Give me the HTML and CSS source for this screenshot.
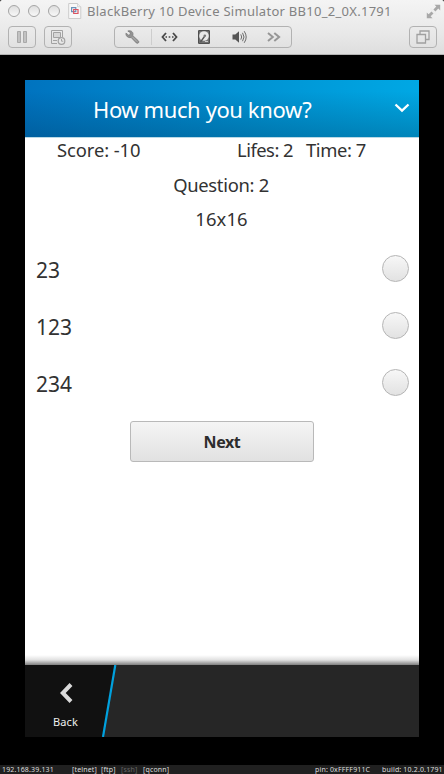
FILE: index.html
```html
<!DOCTYPE html>
<html lang="en">
<head>
<meta charset="utf-8">
<title>BlackBerry 10 Device Simulator</title>
<link rel="stylesheet" href="styles.css">
</head>
<body>
<header class="window">
  <div class="titlebar">
    <div class="lights"><i></i><i></i><i></i></div>
    <svg class="doc" width="14" height="16" viewBox="0 0 14 16"><path d="M.7.500h8.800l3.300 3.300v11.700H.7z" fill="#f8f8f8" stroke="#ccc"/><path d="M9.500.500v3.300h3.300" fill="#eee" stroke="#ccc" stroke-width=".7"/><path d="M3.600 4.600h4.200v4H3.600z" fill="none" stroke="#6b91b8" stroke-width="1.200"/><path d="M5.700 6.500h4.300v4H5.700z" fill="none" stroke="#dc5361" stroke-width="1.200"/></svg>
    <span class="wtitle">BlackBerry 10 Device Simulator BB10_2_0X.1791</span>
    <svg class="expand" width="15" height="15" viewBox="0 0 15 15" fill="#a8a8a8"><path d="M8.500.8h5.700v5.700l-1.900-1.900-2.900 2.900-2-2 2.900-2.900z"/><path d="M.8 8.500v5.700h5.700l-1.900-1.900 2.900-2.900-2-2-2.900 2.900z"/><path d="M4.500 4.500l6 6" stroke="#ececec" stroke-width="1.500"/></svg>
  </div>
  <div class="toolbar">
    <div class="tool"><svg width="12" height="12" viewBox="0 0 12 12"><path d="M1.500.500h3v11h-3zM7.500.500h3v11h-3z" fill="#c2c2c2" stroke="#a9a9a9"/></svg></div>
    <div class="tool snap"><svg width="16" height="16" viewBox="0 0 16 16" fill="none" stroke="#a2a2a2"><path d="M7 14.500H1.500v-13h11V8"/><path d="M3.500 3.500h7v5h-7z" fill="#d7d7d7"/><path d="M3 11.500h4"/><circle cx="11.500" cy="12" r="3.300" fill="#e7e7e7" stroke-width="1.200"/><path d="M11.500 10v2.200h1.800"/></svg></div>
    <div class="group">
      <svg class="wrench" width="15" height="15" viewBox="0 0 16 16"><path d="M1 3.400 3.900 5.500 5.600 4.700 5.700 2.800 3 1.100C5.500 0 8.700 1.500 8.500 4.500L8.300 6l5.900 5.500c1.500 1.600-.6 3.700-2.100 2.300L6.500 8C3.500 8.700.7 6.700 1 3.400z" fill="#929292" stroke="#777" stroke-width=".8"/><path d="M8 7.500l5 5" stroke="#b5b5b5"/></svg>
      <b class="sep"></b>
      <svg class="net" width="17" height="10" viewBox="0 0 17 10"><path d="M5 1 1.500 5 5 9M12 1l3.500 4L12 9" fill="none" stroke="#484848" stroke-width="1.800"/><path d="M4.500 4.200H6v1.600H4.500zM7.700 4.200h1.600v1.600H7.700zM11 4.200h1.500v1.600H11z" fill="#484848"/></svg>
      <svg class="disk" width="12" height="14" viewBox="0 0 12 14"><path d="M.6.600h10.800v12.800H.6z" fill="#777" stroke="#444"/><circle cx="6" cy="6" r="4.800" fill="#e9e9e9"/><path d="M2.500 12 6.500 6.500" stroke="#555" stroke-width="1.300"/><circle cx="6.800" cy="5.800" r="1.300" fill="#777"/><path d="M7 11.500h3" stroke="#ccc"/></svg>
      <svg class="sound" width="15" height="14" viewBox="0 0 15 14"><path d="M.5 4.500h2.800L7 1.200v11.600L3.300 9.500H.5z" fill="#555"/><path d="M8.800 4.400q1.800 2.600 0 5.200M10.500 2.800q3 4.200 0 8.400M12.200 1.200q4 5.800 0 11.600" fill="none" stroke="#6b6b6b"/></svg>
      <svg class="more" width="14" height="10" viewBox="0 0 14 10"><path d="M1 1l4.800 4L1 9M7.300 1l4.800 4-4.800 4" fill="none" stroke="#969696" stroke-width="2"/></svg>
    </div>
    <div class="tool stack"><svg width="14" height="14" viewBox="0 0 14 14" fill="none" stroke="#a0a0a0" stroke-width="1.300"><path d="M1 4.500h8.500V13H1z"/><path d="M4 4.500V1H13v8.500H9.500"/></svg></div>
  </div>
</header>
<main class="phone">
  <div class="head">
    <h1>How much you know?</h1>
    <svg width="16" height="12" viewBox="0 0 16 12"><path d="M1.500 2.500 8 8.700l6.500-6.200" fill="none" stroke="#fff" stroke-width="2.300"/></svg>
  </div>
  <div class="content">
    <div class="stats"><span class="score">Score: -10</span><span class="lifes">Lifes: 2</span><span class="time">Time: 7</span></div>
    <div class="line question">Question: 2</div>
    <div class="line task">16x16</div>
    <ul class="options">
      <li><span>23</span><i></i></li>
      <li><span>123</span><i></i></li>
      <li><span>234</span><i></i></li>
    </ul>
    <button class="next">Next</button>
    <div class="shade"></div>
  </div>
  <nav class="actions">
    <div class="back">
      <svg width="14" height="22" viewBox="0 0 14 22"><path d="M12 2.500 3.800 11l8.200 8.500" fill="none" stroke="#dadada" stroke-width="4"/></svg>
      <span>Back</span>
    </div>
    <svg class="slash" width="18" height="72" viewBox="0 0 18 72"><path d="M0 0h14.500L2.500 72H0z" fill="#111"/><path d="M14.300 0 2 72" stroke="#00a1de" stroke-width="2.200"/></svg>
  </nav>
</main>
<footer class="status"><span class="ip">192.168.39.131</span><span class="telnet">[telnet]</span><span class="ftp">[ftp]</span><span class="ssh">[ssh]</span><span class="qconn">[qconn]</span><span class="pin">pin: 0xFFFF911C</span><span class="build">build: 10.2.0.1791</span></footer>
</body>
</html>
```
FILE: styles.css
```css
* { box-sizing: border-box; }
body { margin: 0; width: 444px; height: 774px; overflow: hidden; background: #000; font-family: "Noto Sans", sans-serif; color: #323232; display: flex; flex-direction: column; white-space: nowrap; }
svg { display: block; flex: none; }
.window { height: 55px; background: linear-gradient(#f4f4f4, #e9e9e9 60%, #dedede); border-bottom: 1px solid #b4b4b4; border-radius: 2px 2px 0 0; }
.titlebar { height: 24px; display: flex; align-items: center; padding: 0 3px 2px 8px; }
.lights { display: flex; gap: 8px; width: 60px; }
.lights i { width: 12px; height: 12px; border: 1px solid #a5a5a5; border-radius: 50%; background: linear-gradient(#dedede, #f8f8f8); }
.wtitle { margin-left: 5px; font-size: 13px; line-height: 20px; letter-spacing: .28px; color: #828282; }
.expand { margin-left: auto; }
.toolbar { display: flex; padding: 2px 7px 0 8px; }
.tool { width: 28px; height: 22px; border: 1px solid #b2b2b2; border-radius: 4px; display: flex; align-items: center; justify-content: center; }
.snap { margin-left: 8px; }
.group { margin-left: 42px; width: 178px; height: 22px; border: 1px solid #b2b2b2; border-radius: 4px; display: flex; align-items: center; padding-left: 10px; }
.sep { margin-left: 11px; width: 1px; height: 16px; background: #cdcdcd; }
.net { margin-left: 9px; }
.disk { margin-left: 20px; }
.sound { margin-left: 22px; }
.more { margin-left: 20px; }
.stack { margin-left: auto; }
.phone { margin: 25px 0 0 25px; width: 394px; height: 657px; display: flex; flex-direction: column; }
.head { height: 57px; background: linear-gradient(180deg, transparent 20%, rgba(0,45,80,.28)), linear-gradient(90deg, #0073bf, #0094d4 60%, #00a8e4); display: flex; align-items: center; justify-content: space-between; padding: 0 9px 0 68px; color: #fff; }
.head svg { margin-top: -1px; }
h1 { margin: 0; font-size: 22px; font-weight: 400; line-height: 30px; letter-spacing: -.4px; }
.content { height: 528px; background: #fff; border-top: 1px solid #b9d9e6; display: flex; flex-direction: column; }
.stats { display: flex; height: 30px; padding-left: 32px; font-size: 18.4px; line-height: 24px; letter-spacing: -.1px; }
.score { width: 180px; }
.lifes { width: 69px; letter-spacing: -.5px; }
.time { letter-spacing: -.4px; }
.line { text-align: center; font-size: 18.4px; line-height: 34px; height: 34px; }
.question { letter-spacing: -.3px; padding-right: 2px; }
.task { letter-spacing: .1px; padding-right: 1px; }
.options { list-style: none; margin: 4px 0 0; padding: 0; }
.options li { height: 57px; display: flex; align-items: center; justify-content: space-between; padding: 0 10px 0 11px; font-size: 21px; }
.options span { padding-top: 2px; }
.options i { width: 27px; height: 27px; border: 1px solid #b5b5b5; border-radius: 50%; background: linear-gradient(#f7f7f7, #e2e2e2); }
.next { margin: 10px auto 0 105px; width: 184px; height: 41px; border: 1px solid #b9b9b9; border-radius: 3px; background: linear-gradient(#f5f5f5, #e1e1e1); font: 700 16px "Noto Sans", sans-serif; letter-spacing: -.4px; color: #2d2d2d; padding: 0; }
.shade { margin-top: auto; height: 10px; background: linear-gradient(rgba(0,0,0,0), rgba(0,0,0,.12) 50%, rgba(0,0,0,.5)); }
.actions { height: 72px; display: flex; background: #262626; }
.back { width: 76px; background: #111; display: flex; flex-direction: column; align-items: center; padding: 17px 0 0 5px; color: #eee; font-size: 11px; line-height: 16px; }
.back span { margin-top: 10px; letter-spacing: .1px; }
.status { margin-top: 28px; height: 9px; background: #202020; display: flex; color: #ddd; font-size: 7px; line-height: 9px; padding-left: 2px; letter-spacing: .16px; }
.ip { width: 70px; }
.telnet { width: 29px; }
.ftp { width: 20px; }
.ssh { width: 22px; color: #666; }
.qconn { width: 172px; }
.pin { width: 67px; }
```
